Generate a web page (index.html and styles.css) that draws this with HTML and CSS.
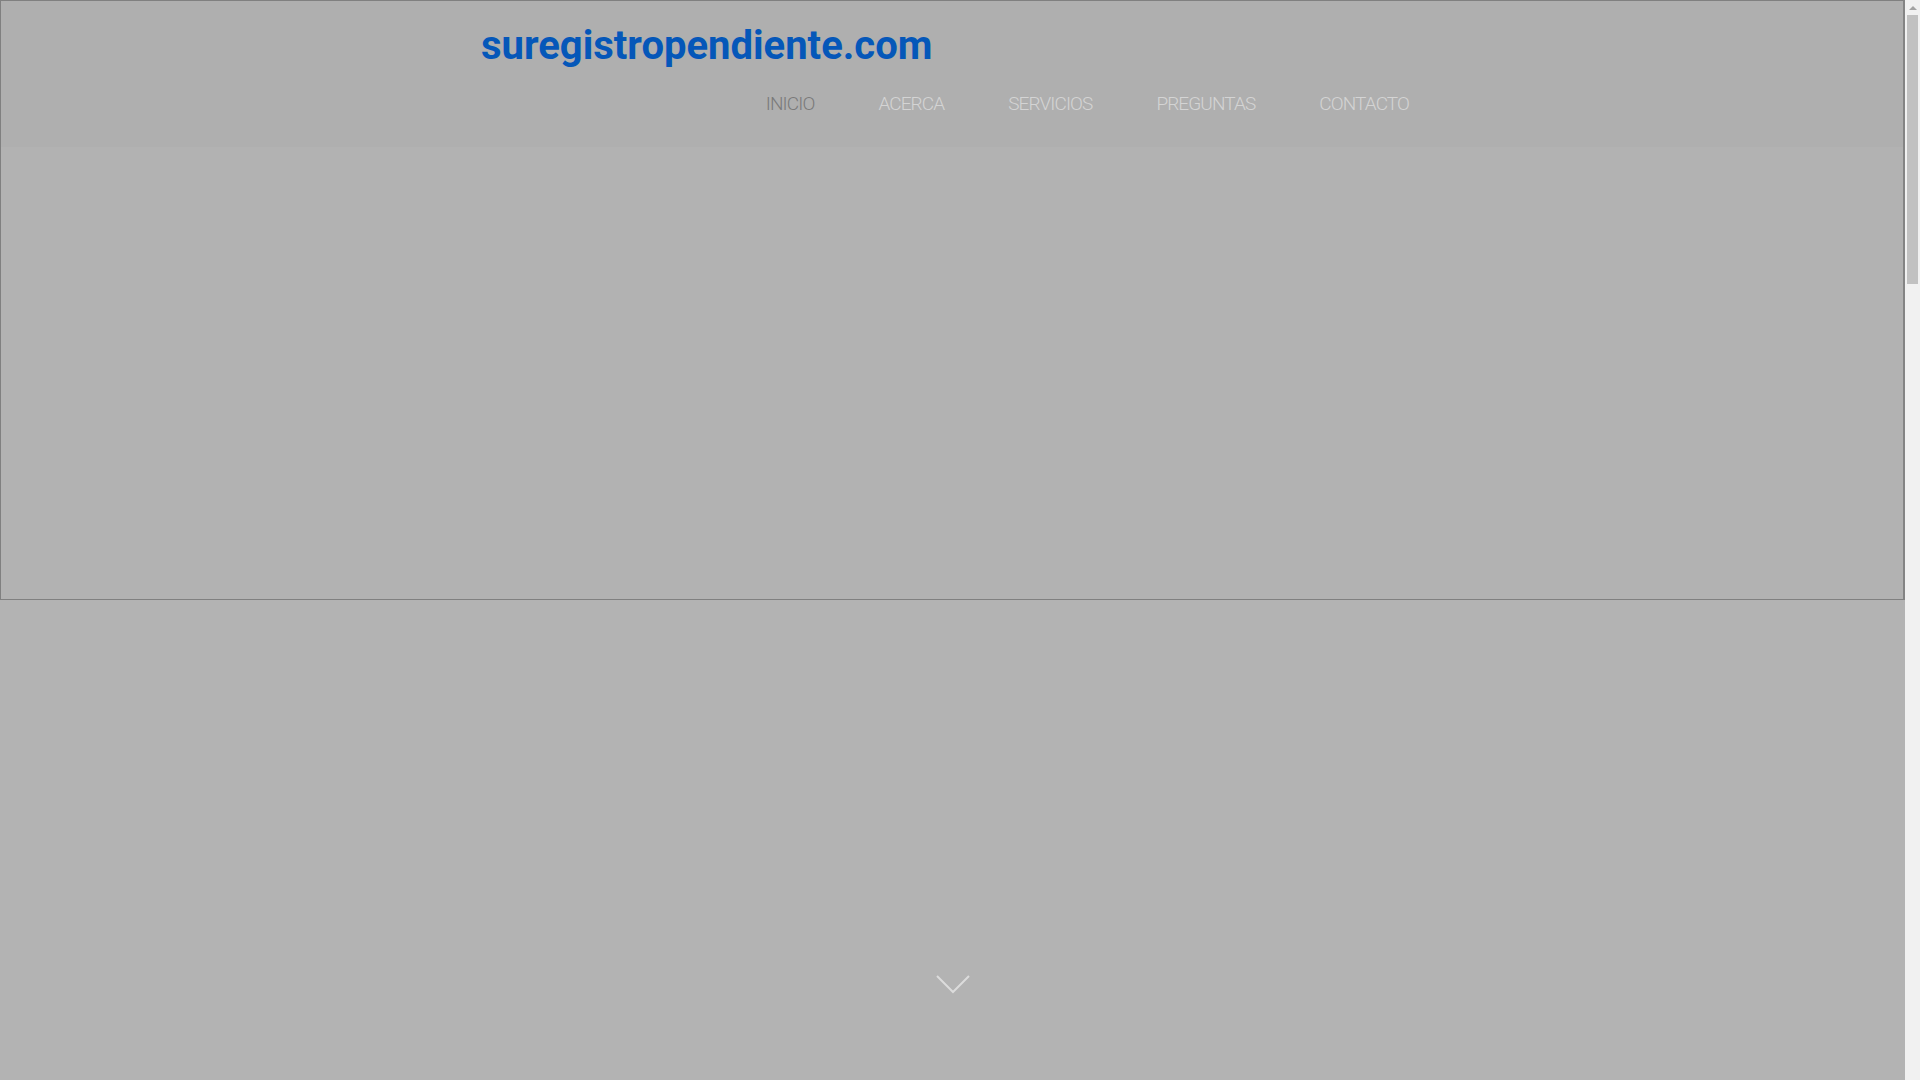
FILE: index.html
```html
<!DOCTYPE html>
<html lang="es">
<head>
<meta charset="utf-8">
<title>suregistropendiente.com</title>
<link rel="stylesheet" href="styles.css">
</head>
<body>
<div class="layout">
  <main class="page">
    <section class="hero">
      <header class="site-header">
        <div class="container">
          <h1 class="brand">suregistropendiente.com</h1>
          <nav class="nav">
            <a class="nav-item active" href="#">INICIO</a>
            <a class="nav-item" href="#">ACERCA</a>
            <a class="nav-item" href="#">SERVICIOS</a>
            <a class="nav-item" href="#">PREGUNTAS</a>
            <a class="nav-item" href="#">CONTACTO</a>
          </nav>
        </div>
      </header>
    </section>
    <section class="below">
      <svg class="chevron" width="34" height="19" viewBox="0 0 34 19" aria-hidden="true">
        <path d="M1 1 L17 17 L33 1" fill="none" stroke="#dcdcdc" stroke-width="2"/>
      </svg>
    </section>
  </main>
  <div class="scrollbar">
    <div class="scroll-arrow"></div>
    <div class="scroll-thumb"></div>
  </div>
</div>
</body>
</html>
```
FILE: styles.css
```css
html, body {
  margin: 0;
  padding: 0;
  height: 100%;
  overflow: hidden;
}

body {
  font-family: Roboto, "Liberation Sans", Arial, sans-serif;
  background: #b3b3b3;
}

.layout {
  display: flex;
  height: 1080px;
}

.page {
  flex: 1;
  display: flex;
  flex-direction: column;
  background: #b3b3b3;
}

.hero {
  height: 600px;
  box-sizing: border-box;
  border: 1px solid #808080;
  border-right: 2px solid #848484;
  background: #b2b2b2;
}

.site-header {
  height: 146px;
  background: #afafaf;
}

.container {
  width: 980px;
  margin: 0 auto;
  box-sizing: border-box;
  padding: 21px 33px 0 19px;
  display: flex;
  flex-direction: column;
}

.brand {
  margin: 0;
  font-size: 40px;
  font-weight: 700;
  line-height: 47px;
  color: #0557b9;
  letter-spacing: 0;
}

.nav {
  display: flex;
  justify-content: flex-end;
  gap: 64px;
  margin-top: 23px;
}

.nav-item {
  font-size: 19px;
  font-weight: 300;
  line-height: 23px;
  letter-spacing: -0.9px;
  color: #d4d4d4;
  text-decoration: none;
}

.nav-item.active {
  color: #7a7a7a;
}

.below {
  flex: 1;
  display: flex;
  flex-direction: column;
  align-items: center;
  justify-content: flex-end;
  padding-bottom: 86px;
}

.chevron {
  display: block;
}

.scrollbar {
  width: 15px;
  background: #f1f1f1;
  display: flex;
  flex-direction: column;
  align-items: center;
}

.scroll-arrow {
  width: 0;
  height: 0;
  margin-top: 6px;
  border-left: 4px solid transparent;
  border-right: 4px solid transparent;
  border-bottom: 4px solid #a3a3a3;
}

.scroll-thumb {
  width: 11px;
  height: 269px;
  margin-top: 5px;
  background: #c1c1c1;
}
```
